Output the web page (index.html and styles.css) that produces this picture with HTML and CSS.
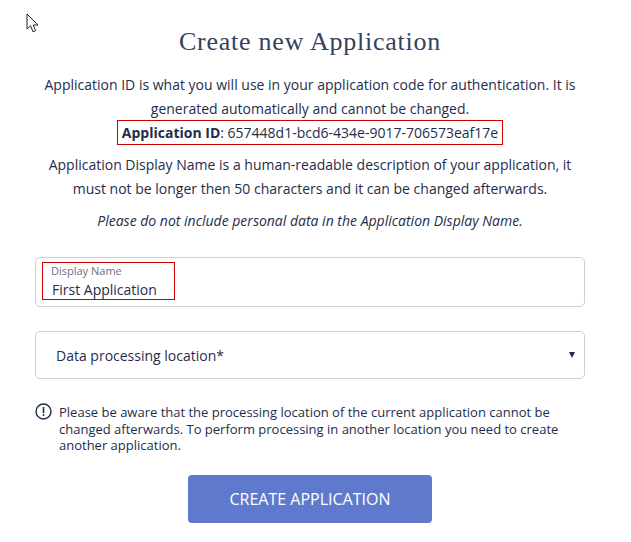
FILE: index.html
```html
<!DOCTYPE html>
<html lang="en">

<head>
    <meta charset="UTF-8">
    <title>Create new Application</title>
    <link rel="stylesheet" href="styles.css">
</head>

<body>
    <svg class="cursor" width="14" height="21" viewBox="0 0 14 21">
        <path d="M1 1 L1 16 L4.5 12.8 L7 18.8 L9.6 17.7 L7.2 12 L12 12 Z" fill="#fff" stroke="#222" stroke-width="1" />
    </svg>
    <div class="container">
        <h1>Create new Application</h1>
        <p class="info">Application ID is what you will use in your application code for authentication. It is generated automatically and cannot be changed.</p>
        <p class="app-id"><span class="marked"><b>Application ID</b>: 657448d1-bcd6-434e-9017-706573eaf17e</span></p>
        <p class="info">Application Display Name is a human-readable description of your application, it must not be longer then 50 characters and it can be changed afterwards.</p>
        <p class="hint">Please do not include personal data in the Application Display Name.</p>

        <div class="field name-field">
            <div class="marked-name">
                <label>Display Name</label>
                <div class="value">First Application</div>
            </div>
        </div>

        <div class="field select-field">
            <span>Data processing location*</span>
            <span class="arrow"></span>
        </div>

        <div class="notice">
            <svg width="17" height="17" viewBox="0 0 17 17">
                <circle cx="8.5" cy="8.5" r="7.5" fill="none" stroke="#1f2d4d" stroke-width="1.4" />
                <rect x="7.7" y="4" width="1.6" height="6" fill="#1f2d4d" />
                <rect x="7.7" y="11.2" width="1.6" height="1.8" fill="#1f2d4d" />
            </svg>
            <p>Please be aware that the processing location of the current application cannot be changed afterwards. To perform processing in another location you need to create another application.</p>
        </div>

        <button type="button">CREATE APPLICATION</button>
    </div>
</body>

</html>
```

FILE: styles.css
```css
body {
    margin: 0;
    background: #fff;
    color: #1f2d4d;
    font-family: "Open Sans", sans-serif;
    font-size: 14px;
}

.cursor {
    position: absolute;
    left: 26px;
    top: 13px;
}

.container {
    width: 550px;
    margin-left: 35px;
    padding-top: 26px;
    text-align: center;
}

h1 {
    margin: 0 0 15px 0;
    color: #35425f;
    font-family: "Liberation Serif", serif;
    font-size: 26px;
    font-weight: normal;
    line-height: 32px;
    letter-spacing: 0.75px;
}

p {
    margin: 0;
}

.info {
    line-height: 23.5px;
}

.app-id {
    line-height: 24px;
    margin: 1px 0 8px 0;
}

.marked {
    border: 1px solid #c00;
    padding: 2px 4px;
}

.hint {
    margin-top: 9px;
    font-style: italic;
    line-height: 24px;
}

.field {
    box-sizing: border-box;
    border: 1px solid #ccd0d5;
    border-radius: 5px;
    text-align: left;
}

.name-field {
    height: 50px;
    margin-top: 24px;
    padding: 4px 6px;
}

.marked-name {
    width: 133px;
    height: 38px;
    box-sizing: border-box;
    border: 1px solid #c00;
    padding: 1px 8px;
}

label {
    display: block;
    font-size: 11px;
    line-height: 13px;
    color: #6b6f85;
}

.value {
    line-height: 19px;
    margin: 3px 0 0 1px;
}

.select-field {
    height: 48px;
    margin-top: 24px;
    padding: 0 9px 0 20px;
    display: flex;
    align-items: center;
    justify-content: space-between;
}

.arrow {
    width: 0;
    height: 0;
    border-left: 3.5px solid transparent;
    border-right: 3.5px solid transparent;
    border-top: 6px solid #1f2d4d;
}

.notice {
    display: flex;
    gap: 7px;
    margin-top: 25px;
    padding-right: 24px;
    text-align: left;
}

.notice svg {
    flex: none;
    margin-top: -1px;
}

.notice p {
    font-size: 13px;
    line-height: 16.5px;
}

button {
    display: block;
    width: 244px;
    height: 48px;
    margin: 21px auto 0 auto;
    border: 0;
    border-radius: 4px;
    background-color: #5f7acd;
    color: #fff;
    font-family: "Open Sans", sans-serif;
    font-size: 16px;
}
```
